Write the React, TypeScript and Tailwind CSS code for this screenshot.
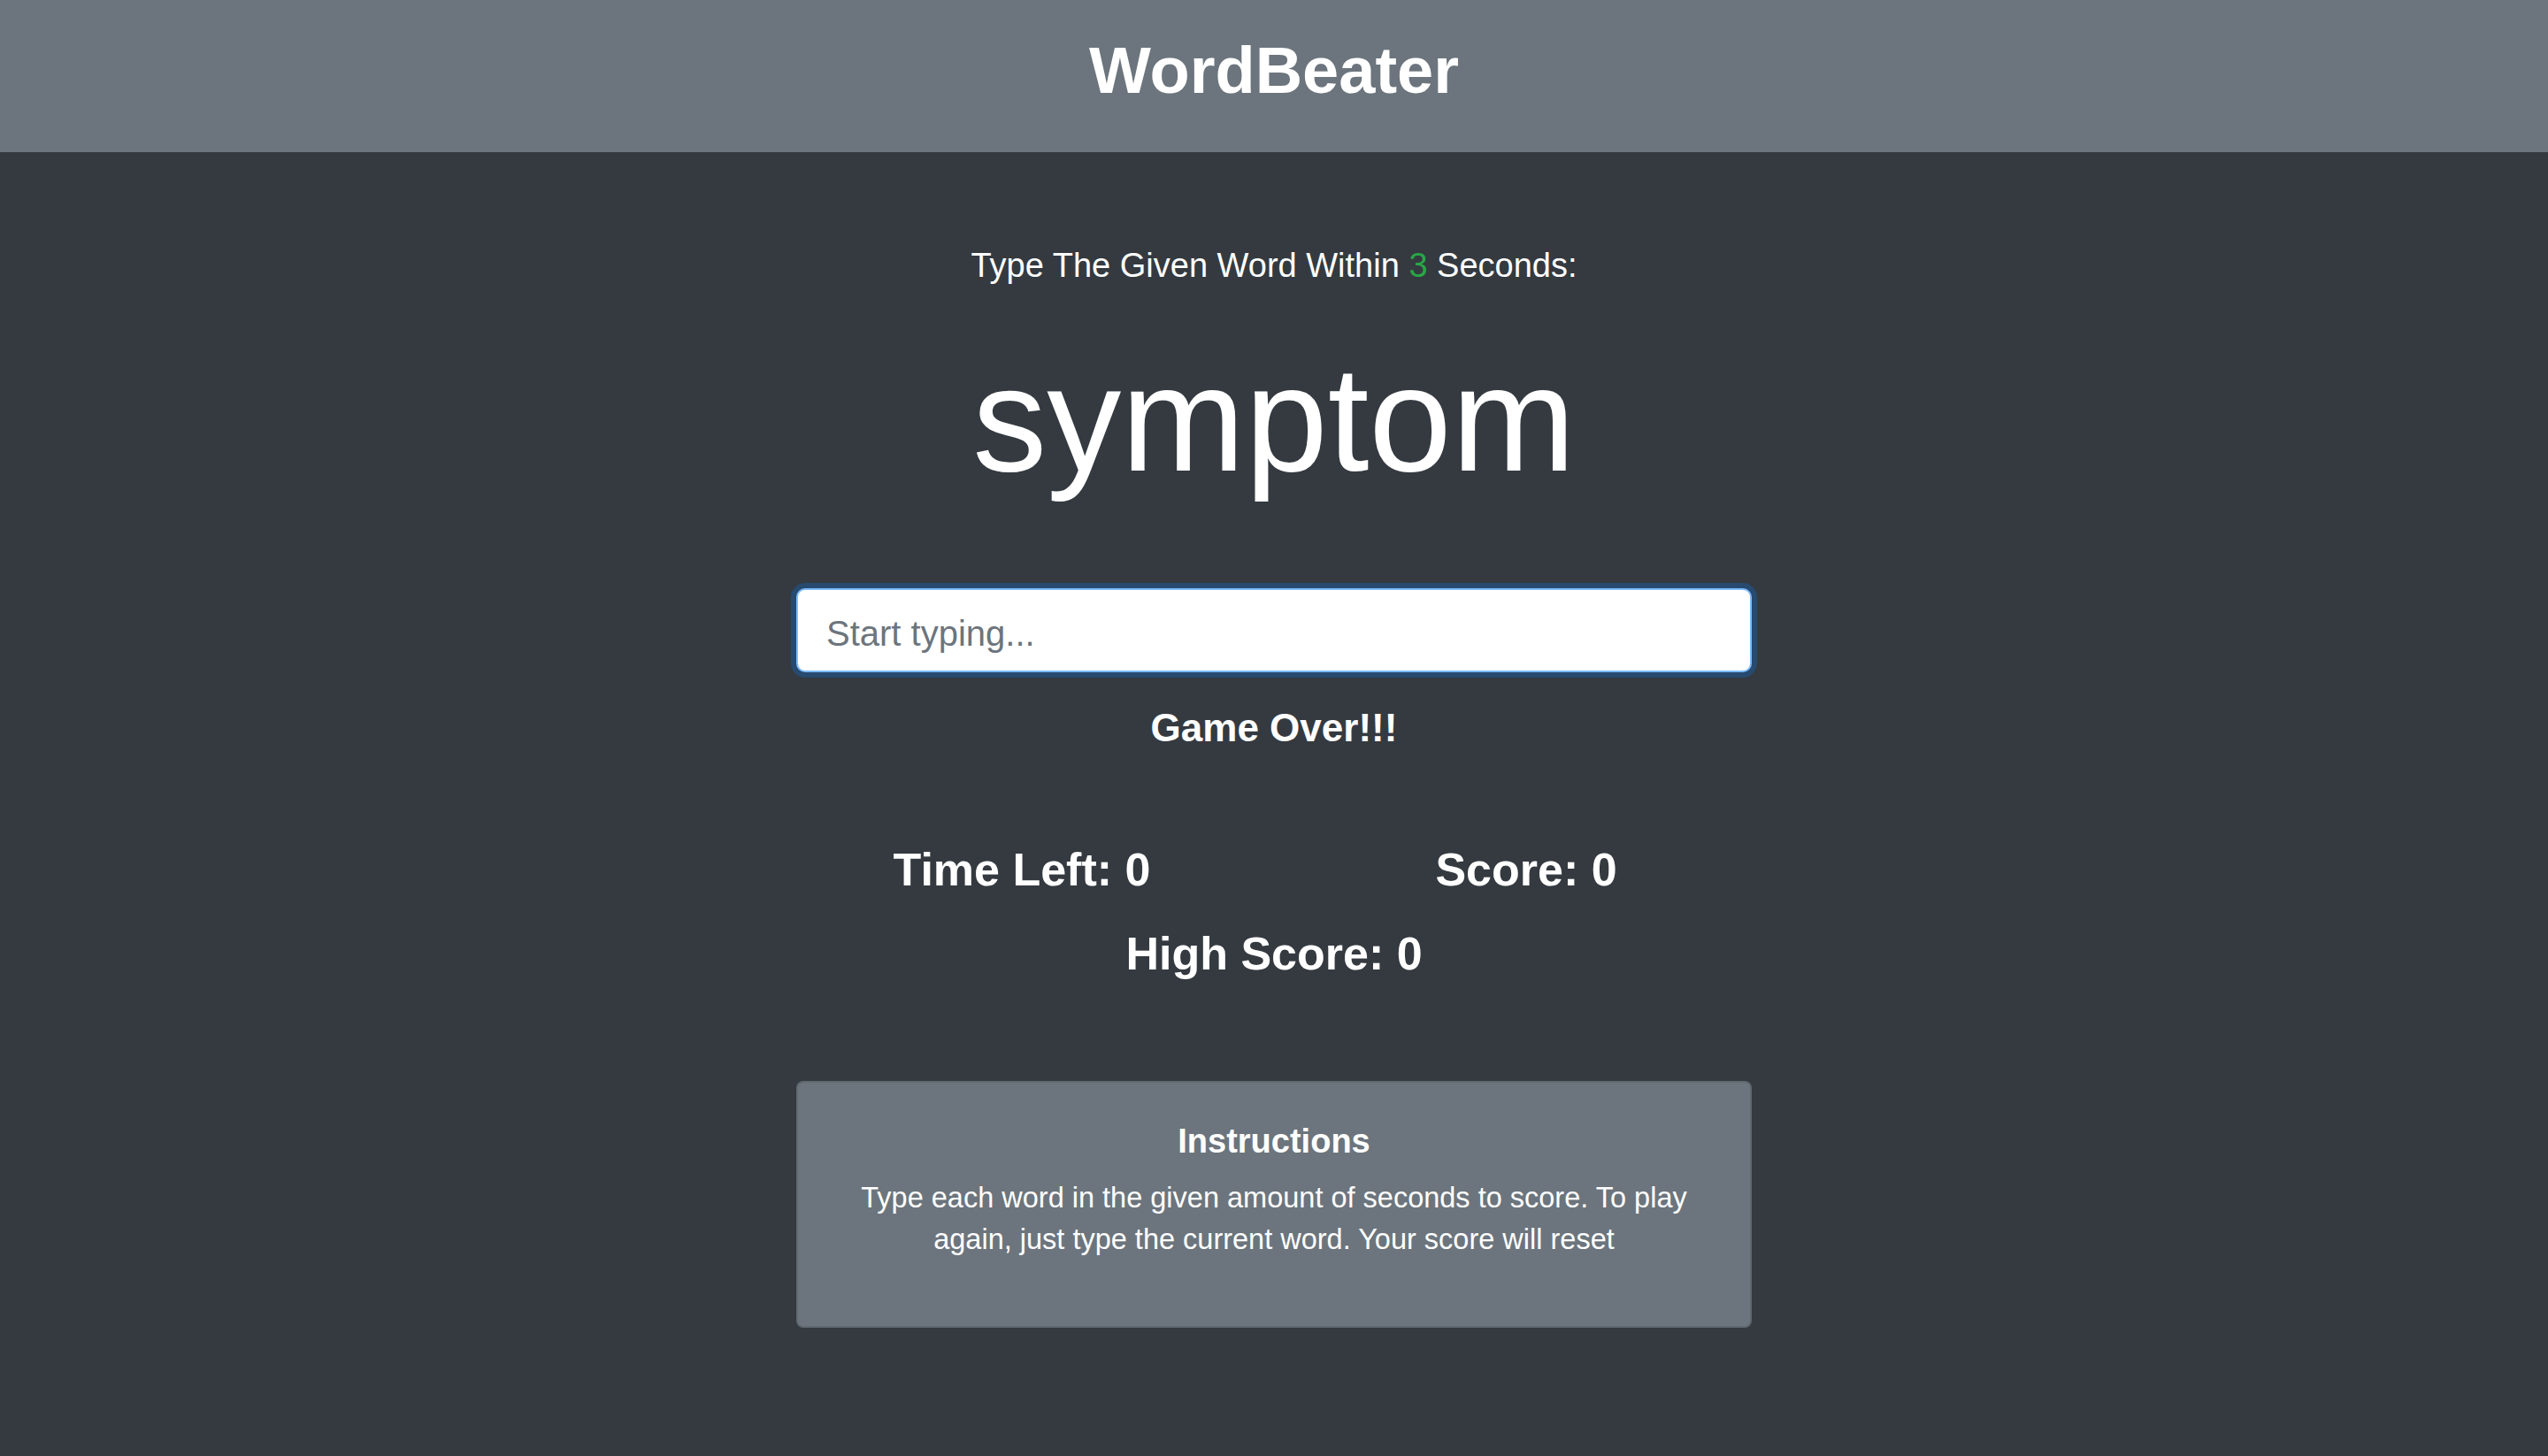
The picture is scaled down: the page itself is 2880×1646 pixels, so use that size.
import React, { useState } from "react"

const font = "font-['Liberation_Sans',Arial,sans-serif]"

export default function App() {
    const [value, setValue] = useState("")

    return (
        <div className={`min-h-screen bg-[#343a40] text-white ${font}`}>
            {/* Header bar */}
            <header className="bg-[#6c757d] h-[172px] pt-[32px] text-center">
                <h1 className="text-[74px] leading-[96px] font-bold">WordBeater</h1>
            </header>

            <main className="flex flex-col items-center text-center">
                <p className="mt-[100px] text-[38px] leading-[56px] font-light">
                    Type The Given Word Within <span className="text-[#28a745]">3</span> Seconds:
                </p>

                <h2 className="mt-[45px] text-[168px] leading-[202px] font-light">symptom</h2>

                <input
                    type="text"
                    value={value}
                    onChange={(e) => setValue(e.target.value)}
                    placeholder="Start typing..."
                    autoFocus
                    className="mt-[90px] w-[1080px] h-[95px] rounded-[10px] border-2 border-[#80bdff] bg-white px-[32px] pt-[7px] text-[40px] text-[#495057] caret-[#212529] placeholder:text-[#6c757d] outline-none shadow-[0_0_0_6px_rgba(0,123,255,0.25)]"
                />

                <h4 className="mt-[36px] text-[44px] leading-[53px] font-bold">Game Over!!!</h4>

                {/* Stats */}
                <div className="mt-[103px] w-[1140px] flex">
                    <h3 className="flex-1 text-[52px] leading-[62px] font-bold">Time Left: 0</h3>
                    <h3 className="flex-1 text-[52px] leading-[62px] font-bold">Score: 0</h3>
                </div>
                <h3 className="mt-[33px] text-[52px] leading-[62px] font-bold">High Score: 0</h3>

                {/* Instructions card */}
                <div className="mt-[113px] mb-[100px] w-[1080px] rounded-[8px] border-2 border-black/10 bg-[#6c757d] px-[40px] pt-[43px] pb-[74px]">
                    <h5 className="text-[38px] leading-[46px] font-bold">Instructions</h5>
                    <p className="mt-[18px] text-[32.5px] leading-[47px]">
                        Type each word in the given amount of seconds to score. To play again, just type the current word. Your score will reset
                    </p>
                </div>
            </main>
        </div>
    )
}
